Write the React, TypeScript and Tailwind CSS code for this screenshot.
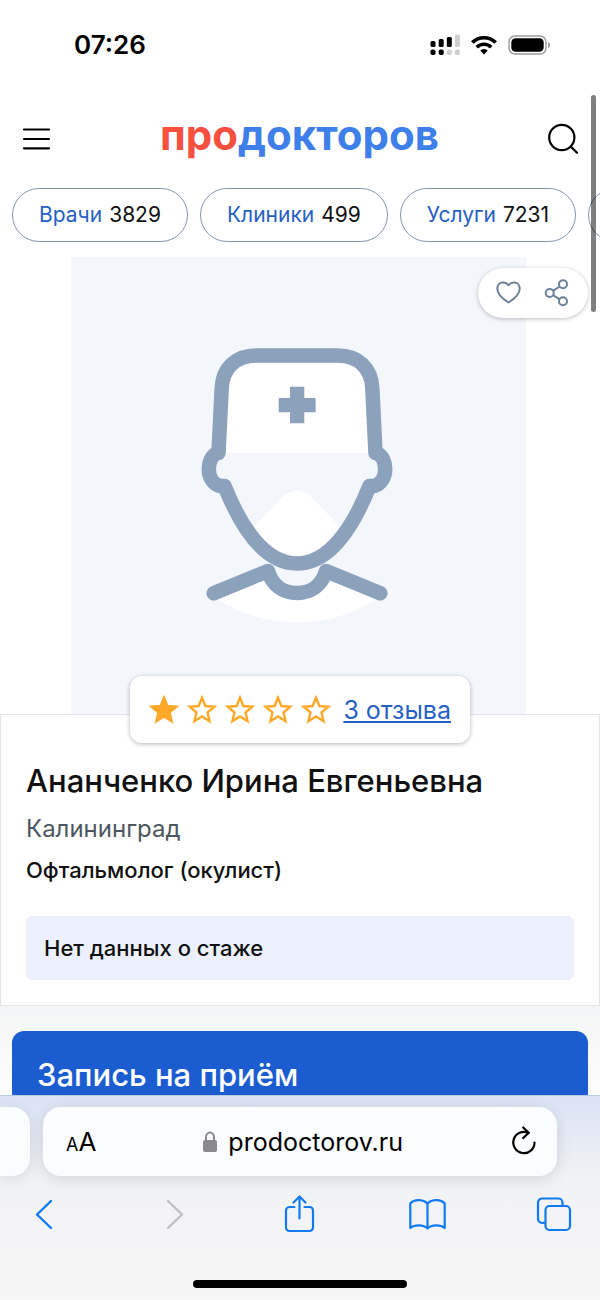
import React from "react";

/* ------------------------------------------------------------------ */
/*  Status bar                                                          */
/* ------------------------------------------------------------------ */
function StatusBar() {
  return (
    <div className="flex h-[90px] shrink-0 items-center justify-between pr-[49px] pl-[74px]">
      <span className="text-[26px] leading-8 font-semibold text-black">
        07:26
      </span>
      <div className="flex items-center gap-[11px]">
        <svg width="30" height="22" viewBox="0 0 30 22" aria-hidden="true">
          <g fill="#000">
            <rect x="0.5" y="7" width="5" height="6" rx="1.5" />
            <rect x="8.7" y="5" width="5" height="8" rx="1.5" />
            <rect x="16.8" y="3" width="5" height="10" rx="1.5" />
            <rect x="0.5" y="15.5" width="5" height="5.5" rx="1.8" />
            <rect x="8.7" y="15.5" width="5" height="5.5" rx="1.8" />
          </g>
          <g fill="#cfcfcf">
            <rect x="24.9" y="0.5" width="5" height="12.5" rx="1.5" />
            <rect x="16.8" y="15.5" width="5" height="5.5" rx="1.8" />
            <rect x="24.9" y="15.5" width="5" height="5.5" rx="1.8" />
          </g>
        </svg>
        <svg width="26" height="20" viewBox="0 0 26 20" aria-hidden="true">
          <g fill="none" stroke="#000" strokeWidth="3.6">
            <path d="M1.3 7.6a16.5 16.5 0 0 1 23.4 0" />
            <path d="M5.8 12.2a10.2 10.2 0 0 1 14.4 0" />
          </g>
          <path d="M13 19.4l-3.8-3.9a5.4 5.4 0 0 1 7.6 0z" fill="#000" />
        </svg>
        <svg width="43" height="20" viewBox="0 0 43 20" aria-hidden="true">
          <rect
            x="1"
            y="1"
            width="37"
            height="18"
            rx="6"
            fill="none"
            stroke="#9b9b9b"
            strokeWidth="1.4"
          />
          <rect x="3.3" y="3.2" width="32.4" height="13.6" rx="4.2" fill="#000" />
          <path d="M40 7c2.6.8 2.6 5.2 0 6z" fill="#9b9b9b" />
        </svg>
      </div>
    </div>
  );
}

/* ------------------------------------------------------------------ */
/*  Site header                                                         */
/* ------------------------------------------------------------------ */
function Header() {
  return (
    <header className="flex h-[98px] shrink-0 items-center justify-between px-[21px]">
      <button type="button" aria-label="Меню">
        <svg width="31" height="30" viewBox="0 0 31 30" aria-hidden="true">
          <path
            d="M3 5.5h25M3 15h25M3 24.3h25"
            stroke="#000"
            strokeWidth="2.2"
            strokeLinecap="round"
          />
        </svg>
      </button>
      <a
        href="#"
        className="pb-2 text-[42px] leading-[48px] font-bold text-[#3f7fea]"
      >
        <span className="text-[#f8503f]">про</span>докторов
      </a>
      <button type="button" aria-label="Поиск">
        <svg width="32" height="32" viewBox="0 0 32 32" aria-hidden="true">
          <g fill="none" stroke="#000" strokeWidth="2.2" strokeLinecap="round">
            <circle cx="14.8" cy="14.5" r="12.6" />
            <path d="M23.8 23.6l6.2 6.2" />
          </g>
        </svg>
      </button>
    </header>
  );
}

const sections = [
  { label: "Врачи", count: "3829" },
  { label: "Клиники", count: "499" },
  { label: "Услуги", count: "7231" },
  { label: "", count: "" },
];

function SectionChips() {
  return (
    <nav className="flex shrink-0 gap-3 overflow-hidden pl-3">
      {sections.map((s, i) => (
        <a
          key={i}
          href="#"
          className="flex h-[54px] shrink-0 items-center gap-[7px] rounded-full border border-[#8496b0] px-[26px] text-[21px] leading-7 text-[#111]"
        >
          <span className="text-[#2660c4]">{s.label}</span>
          {s.count}
        </a>
      ))}
    </nav>
  );
}

/* ------------------------------------------------------------------ */
/*  Photo placeholder                                                   */
/* ------------------------------------------------------------------ */
function DoctorPlaceholder() {
  return (
    <svg
      viewBox="71 257 455 457"
      className="block w-full bg-[#f3f6fb]"
      role="img"
      aria-label="Фото врача"
    >
      <g fill="#fff">
        <path d="M218.5 453.3L222 388C223 368 238 355.5 256 355.5H338C356 355.5 371 368 372 388L375.5 453.3Z" />
        <path d="M250 531L274 506C283 496 289 491 297 491S311 496 320 506L344 531C330 550 315 563 297 563S264 550 250 531Z" />
        <path d="M214 597L268 571C272 585 283 593 297 593S322 585 326 571L380 597C355 614 326 622.3 297 622.3S239 614 214 597Z" />
      </g>
      <g
        fill="none"
        stroke="#8ca1bc"
        strokeWidth="14.5"
        strokeLinecap="round"
        strokeLinejoin="round"
      >
        <path d="M218.5 453L221.7 388C222.7 368 236 355.5 256 355.5H338C358 355.5 371.3 368 372.3 388L375.5 453" />
        <path d="M217.5 453C206 457 205 482 220 486L224.5 486C242 530 266 563.5 297 563.5S352 530 369.5 486L374 486C389 482 388 457 376.5 453" />
        <path d="M213.7 593.3L268 571C272 585 283 593 297 593S322 585 326 571L380.3 593.3" />
      </g>
      <path
        d="M290 386.7h14.3v11.3h11.3v14.3h-11.3v11h-14.3v-11h-11.3v-14.3h11.3z"
        fill="#8ca1bc"
      />
    </svg>
  );
}

function PhotoActions() {
  return (
    <div className="absolute top-[11px] right-3 flex h-[50px] w-[110px] items-center justify-between rounded-full bg-white px-[17px] shadow-[0_1px_4px_rgba(0,0,0,0.25)]">
      <button type="button" aria-label="В избранное">
        <svg width="28" height="28" viewBox="0 0 28 28" aria-hidden="true">
          <path
            d="M13.5 23.500C9.500 21 2.300 15.300 2.300 9.700C2.300 6 4.800 3.500 7.800 3.500C10.300 3.500 12 4.200 13.500 6.200C15 4.200 16.700 3.500 19.200 3.500C22.200 3.500 24.700 6 24.700 9.700C24.700 15.300 17.500 21 13.500 23.500Z"
            fill="none"
            stroke="#6c8199"
            strokeWidth="2"
            strokeLinejoin="round"
          />
        </svg>
      </button>
      <button type="button" aria-label="Поделиться">
        <svg width="28" height="28" viewBox="0 0 28 28" aria-hidden="true">
          <g fill="none" stroke="#6c8199" strokeWidth="2">
            <circle cx="6.7" cy="14" r="4" />
            <circle cx="20" cy="5.3" r="4" />
            <circle cx="20" cy="22.3" r="4" />
            <path d="M10.1 11.9l6.600-4.400M10.100 16.100l6.600 4.200" />
          </g>
        </svg>
      </button>
    </div>
  );
}

/* ------------------------------------------------------------------ */
/*  Rating                                                              */
/* ------------------------------------------------------------------ */
function Star({ filled }: { filled: boolean }) {
  return (
    <svg width="32" height="30" viewBox="0 0 32 30" aria-hidden="true">
      <path
        d="M16 2.700L19.400 11L28.300 11.700L21.500 17.500L23.600 26.200L16 21.500L8.400 26.200L10.500 17.500L3.700 11.700L12.600 11Z"
        fill={filled ? "#fda829" : "none"}
        stroke="#fda829"
        strokeWidth="2.4"
      />
    </svg>
  );
}

function Rating({ value }: { value: number }) {
  return (
    <div className="absolute -top-[39px] left-1/2 flex h-[67px] w-[340px] -translate-x-1/2 items-center justify-between rounded-xl bg-white pr-[19px] pl-[18px] shadow-[0_1px_4px_rgba(0,0,0,0.3)]">
      <div className="flex gap-[6px]">
        {[1, 2, 3, 4, 5].map((n) => (
          <Star key={n} filled={n <= value} />
        ))}
      </div>
      <a
        href="#"
        className="text-[25px] leading-8 text-[#2660c4] underline decoration-2 underline-offset-2"
      >
        3 отзыва
      </a>
    </div>
  );
}

/* ------------------------------------------------------------------ */
/*  Browser toolbar                                                     */
/* ------------------------------------------------------------------ */
function BrowserBar() {
  return (
    <footer className="relative shrink-0 overflow-hidden border-t border-[#bcc8e0] bg-linear-to-b from-[#dbe3f5] via-[#f1f2f4] via-40% to-[#f6f6f7] pt-[11px] pb-3">
      <div className="flex gap-[13px] pr-[43px]">
        <div className="h-[69px] w-[30px] shrink-0 rounded-r-[18px] bg-[#fbfcfe] shadow-[0_3px_16px_rgba(0,0,0,0.1)]" />
        <div className="flex h-[69px] min-w-0 flex-1 items-center justify-between rounded-[18px] bg-[#fbfcfe] pr-[18px] pl-[23px] shadow-[0_3px_16px_rgba(0,0,0,0.12)]">
          <button
            type="button"
            aria-label="Настройки страницы"
            className="flex items-baseline pt-1 text-black"
          >
            <span className="text-[18px] leading-8">A</span>
            <span className="text-[26px] leading-8">A</span>
          </button>
          <div className="flex items-center gap-[10px]">
            <svg width="16" height="22" viewBox="0 0 16 22" aria-hidden="true">
              <rect x="1" y="9" width="14" height="12" rx="2" fill="#8a8a8d" />
              <path
                d="M4 10V6a4 4.500 0 0 1 8 0v4"
                fill="none"
                stroke="#8a8a8d"
                strokeWidth="2"
              />
            </svg>
            <span className="text-[25px] leading-8 text-black">
              prodoctorov.ru
            </span>
          </div>
          <button type="button" aria-label="Обновить">
            <svg width="30" height="32" viewBox="0 0 30 32" aria-hidden="true">
              <g
                fill="none"
                stroke="#000"
                strokeWidth="2.2"
                strokeLinecap="round"
                strokeLinejoin="round"
              >
                <path d="M25.500 16.500A10.600 10.600 0 1 1 19.500 7" />
                <path d="M14.200 1.500L19.700 6.700L14.200 12" />
              </g>
            </svg>
          </button>
        </div>
      </div>

      <div className="flex items-center justify-between pt-[18px] pr-[27px] pl-[25px] text-[#127af0]">
        <button type="button" aria-label="Назад">
          <svg width="38" height="40" viewBox="0 0 38 40" aria-hidden="true">
            <path
              d="M26 7L12 20.500L26 34"
              fill="none"
              stroke="currentColor"
              strokeWidth="2.4"
              strokeLinecap="round"
              strokeLinejoin="round"
            />
          </svg>
        </button>
        <button type="button" aria-label="Вперёд" className="text-[#bfbfc1]">
          <svg width="38" height="40" viewBox="0 0 38 40" aria-hidden="true">
            <path
              d="M15 7L29 20.500L15 34"
              fill="none"
              stroke="currentColor"
              strokeWidth="2.4"
              strokeLinecap="round"
              strokeLinejoin="round"
            />
          </svg>
        </button>
        <button type="button" aria-label="Поделиться страницей">
          <svg width="38" height="40" viewBox="0 0 38 40" aria-hidden="true">
            <g
              fill="none"
              stroke="currentColor"
              strokeWidth="2.2"
              strokeLinecap="round"
              strokeLinejoin="round"
            >
              <path d="M14.500 13H9.500a3.500 3.500 0 0 0-3.500 3.500v17a3.500 3.500 0 0 0 3.500 3.500h20a3.500 3.500 0 0 0 3.500-3.500v-17a3.500 3.500 0 0 0-3.500-3.500h-5" />
              <path d="M19.500 24.500V2.500M13.500 8.500l6-6 6 6" />
            </g>
          </svg>
        </button>
        <button type="button" aria-label="Закладки">
          <svg width="38" height="40" viewBox="0 0 38 40" aria-hidden="true">
            <path
              d="M19.500 10C16.500 5.500 6.500 4.500 2.300 9.500V34C6.500 30.500 15.500 30.500 19.500 34.500C23.500 30.500 32.500 30.500 36.700 34V9.500C32.500 4.500 22.500 5.500 19.500 10ZM19.500 10V34"
              fill="none"
              stroke="currentColor"
              strokeWidth="2.2"
              strokeLinejoin="round"
            />
          </svg>
        </button>
        <button type="button" aria-label="Вкладки">
          <svg width="38" height="40" viewBox="0 0 38 40" aria-hidden="true">
            <g fill="none" stroke="currentColor" strokeWidth="2.2">
              <rect x="10.5" y="12" width="24.500" height="24" rx="4" />
              <path d="M10.500 28.800H7A4 4 0 0 1 3 24.800V8.500a4 4 0 0 1 4-4h16.500a4 4 0 0 1 4 4V12" />
            </g>
          </svg>
        </button>
      </div>

      <div className="mx-auto mt-[46px] h-2 w-[214px] rounded-full bg-black" />
    </footer>
  );
}

export default function App() {
  return (
    <div className="relative flex h-screen flex-col overflow-hidden bg-white font-['Inter','Liberation_Sans',sans-serif]">
      <StatusBar />
      <main className="flex min-h-0 flex-1 flex-col overflow-hidden">
        <Header />
        <SectionChips />

        <div className="relative mt-[15px] shrink-0 pr-[74px] pl-[71px]">
          <DoctorPlaceholder />
          <PhotoActions />
        </div>

        <section className="relative shrink-0 border border-[#e3e5e9] bg-white px-[25px] pt-[46px] pb-[25px]">
          <Rating value={1} />
          <h1 className="text-[31px] leading-10 font-[450] text-[#111]">
            Ананченко Ирина Евгеньевна
          </h1>
          <p className="mt-3 text-[24px] leading-8 text-[#4d5660]">
            Калининград
          </p>
          <p className="mt-[9px] text-[22px] leading-8 font-[450] text-[#111]">
            Офтальмолог (окулист)
          </p>
          <p className="mt-[30px] rounded-md bg-[#ecf0fc] px-[18px] py-4 text-[22px] leading-8 font-[450] text-[#111]">
            Нет данных о стаже
          </p>
        </section>

        <div className="shrink-0 bg-linear-to-b from-[#f4f5f6] to-white to-60% px-3 pt-[25px]">
          <section className="h-40 rounded-xl bg-[#1b5dd0] px-[25px] pt-6">
            <h2 className="text-[31px] leading-10 font-[450] text-white">
              Запись на приём
            </h2>
          </section>
        </div>
      </main>
      <BrowserBar />

      {/* Scroll thumb */}
      <div className="absolute top-[95px] right-1 h-[217px] w-[5px] rounded-full bg-black/50" />
    </div>
  );
}
